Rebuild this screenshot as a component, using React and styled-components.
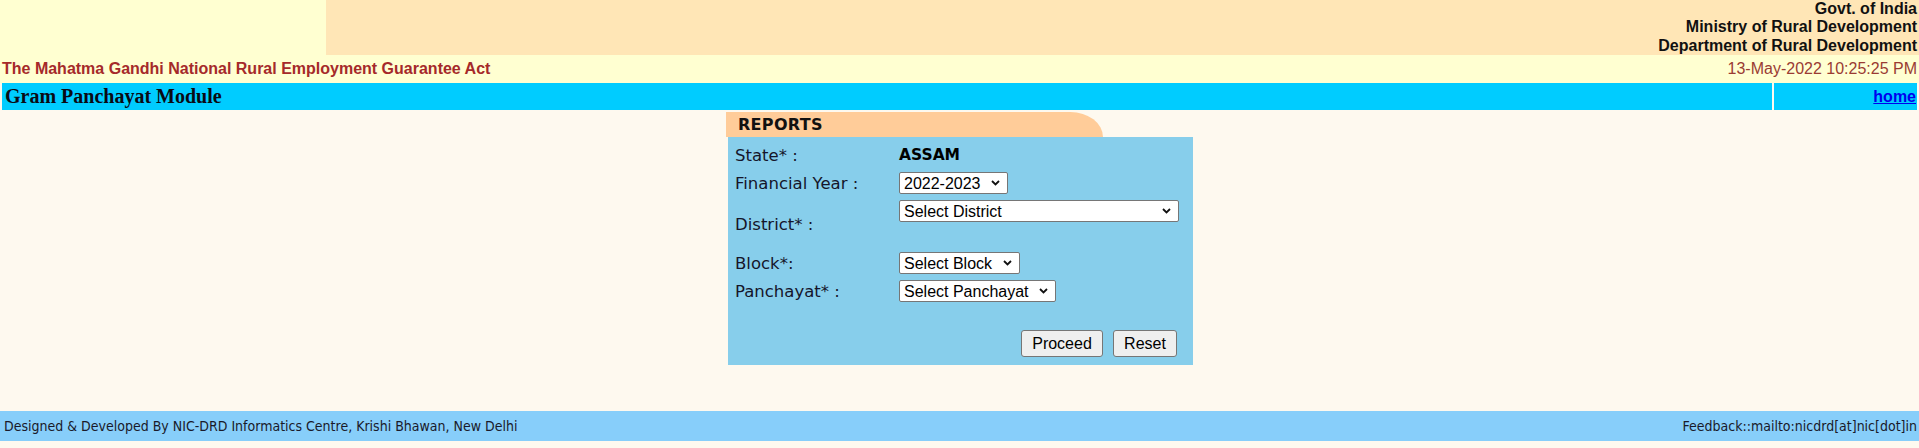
import React from 'react';
import styled, { createGlobalStyle } from 'styled-components';

const GlobalStyle = createGlobalStyle`
  html, body {
    margin: 0;
    padding: 0;
    background: #fef9ef;
  }
  body {
    font-family: 'Liberation Sans', Arial, sans-serif;
  }
`;

const Page = styled.div`
  width: 1919px;
  min-height: 448px;
  background: #fef9ef;
`;

const Masthead = styled.div`
  display: flex;
  height: 55px;
`;

const LogoCell = styled.div`
  width: 326px;
  background: #ffffd1;
`;

const MinistryCell = styled.div`
  flex: 1;
  background: #ffe6b6;
  text-align: right;
  font-family: 'Liberation Sans', Arial, sans-serif;
  font-weight: bold;
  font-size: 16px;
  line-height: 18.3px;
  color: #111;
  padding-right: 2px;
`;

const ActRow = styled.div`
  display: flex;
  align-items: center;
  justify-content: space-between;
  height: 28px;
  background: #ffffd1;
  padding: 0 2px 0 2px;
`;

const ActTitle = styled.span`
  font-family: 'Liberation Sans', Arial, sans-serif;
  font-weight: bold;
  font-size: 16px;
  color: #a52a2a;
`;

const DateText = styled.span`
  font-family: 'Liberation Sans', Arial, sans-serif;
  font-size: 16px;
  color: #9a3b33;
`;

const NavBar = styled.div`
  display: flex;
  gap: 2px;
  height: 27px;
  padding: 0 2px;
  background: #fef9ef;
`;

const NavCell = styled.div`
  display: flex;
  align-items: center;
  justify-content: ${({ $right }) => ($right ? 'flex-end' : 'flex-start')};
  width: ${({ $w }) => ($w ? `${$w}px` : 'auto')};
  flex: ${({ $w }) => ($w ? 'none' : '1')};
  background: #00ccff;
  padding: 0 ${({ $right }) => ($right ? '1px' : '3px')};
`;

const ModuleTitle = styled.span`
  font-family: 'Liberation Serif', 'Times New Roman', serif;
  font-weight: bold;
  font-size: 20px;
  color: #0a0a14;
`;

const HomeLink = styled.a`
  font-family: 'Liberation Sans', Arial, sans-serif;
  font-weight: bold;
  font-size: 16px;
  color: #0000ee;
  text-decoration: underline;
`;

const Main = styled.div`
  height: 299px;
  padding-top: 2px;
`;

const ReportBox = styled.div`
  width: 467px;
  margin: 0 auto;
`;

const ReportTab = styled.div`
  width: 377px;
  height: 25px;
  box-sizing: border-box;
  background: #ffcc99;
  border-top-right-radius: 34px 26px;
  padding-left: 12px;
  display: flex;
  align-items: center;
  font-family: 'DejaVu Sans', Verdana, sans-serif;
  font-weight: bold;
  font-size: 16px;
  color: #111;
  letter-spacing: 0.3px;
`;

const Panel = styled.div`
  margin-left: 2px;
  width: 465px;
  height: 228px;
  box-sizing: border-box;
  background: #87ceeb;
  padding: 7px 16px 0 7px;
  display: flex;
  flex-direction: column;
  gap: 6px;
`;

const FormRow = styled.div`
  display: grid;
  grid-template-columns: 164px 1fr;
  align-items: center;
  min-height: ${({ $tall }) => ($tall ? '46px' : '22px')};
`;

const RowLabel = styled.span`
  font-family: 'DejaVu Sans', Verdana, sans-serif;
  font-size: 16.5px;
  color: #15152a;
  padding-top: ${({ $shift }) => ($shift || 0)}px;
`;

const RowValue = styled.div`
  display: flex;
  flex-direction: column;
  align-self: ${({ $top }) => ($top ? 'start' : 'center')};
`;

const StateName = styled.span`
  font-family: 'DejaVu Sans', Verdana, sans-serif;
  font-weight: bold;
  font-size: 15.5px;
  color: #000;
`;

const SelectWrap = styled.span`
  position: relative;
  display: inline-flex;
  align-self: flex-start;
`;

const Select = styled.select`
  appearance: none;
  -webkit-appearance: none;
  font-family: 'Liberation Sans', Arial, sans-serif;
  font-size: 16px;
  color: #000;
  background: #fff;
  border: 1px solid #767676;
  border-radius: 2px;
  height: 22px;
  padding: 0 26px 0 4px;
  width: ${({ $w }) => ($w ? `${$w}px` : 'auto')};
  outline: none;
`;

const Chevron = styled.svg`
  position: absolute;
  right: 8px;
  top: 8px;
  width: 9px;
  height: 6px;
  pointer-events: none;
`;

const ButtonRow = styled.div`
  display: flex;
  justify-content: flex-end;
  gap: 10px;
  margin-top: 22px;
`;

const Button = styled.button`
  font-family: 'Liberation Sans', Arial, sans-serif;
  font-size: 16px;
  color: #000;
  background: #efefef;
  border: 1px solid #767676;
  border-radius: 3px;
  height: 27px;
  padding: 0 10px;
  width: ${({ $w }) => `${$w}px`};
`;

const Footer = styled.div`
  display: flex;
  align-items: center;
  justify-content: space-between;
  height: 30px;
  background: #87cefa;
  padding: 0 2px 0 4px;
  font-family: 'DejaVu Sans Condensed', Tahoma, sans-serif;
  font-size: 14px;
  color: #1a1a2a;
`;

const DropDown = ({ children, w }) => (
  <SelectWrap>
    <Select $w={w} defaultValue={children}>
      <option>{children}</option>
    </Select>
    <Chevron viewBox="0 0 9 6">
      <path d="M1 1 L4.5 4.5 L8 1" fill="none" stroke="#111" strokeWidth="1.8" />
    </Chevron>
  </SelectWrap>
);

export default function App() {
  return (
    <Page>
      <GlobalStyle />
      <Masthead>
        <LogoCell />
        <MinistryCell>
          Govt. of India
          <br />
          Ministry of Rural Development
          <br />
          Department of Rural Development
        </MinistryCell>
      </Masthead>

      <ActRow>
        <ActTitle>The Mahatma Gandhi National Rural Employment Guarantee Act</ActTitle>
        <DateText>13-May-2022 10:25:25 PM</DateText>
      </ActRow>

      <NavBar>
        <NavCell>
          <ModuleTitle>Gram Panchayat Module</ModuleTitle>
        </NavCell>
        <NavCell $w={141} $right>
          <HomeLink href="#">home</HomeLink>
        </NavCell>
      </NavBar>

      <Main>
        <ReportBox>
          <ReportTab>REPORTS</ReportTab>
          <Panel>
            <FormRow>
              <RowLabel>State* :</RowLabel>
              <RowValue>
                <StateName>ASSAM</StateName>
              </RowValue>
            </FormRow>
            <FormRow>
              <RowLabel>Financial Year :</RowLabel>
              <RowValue>
                <DropDown>2022-2023</DropDown>
              </RowValue>
            </FormRow>
            <FormRow $tall>
              <RowLabel $shift={3}>District* :</RowLabel>
              <RowValue $top>
                <DropDown w={280}>Select District</DropDown>
              </RowValue>
            </FormRow>
            <FormRow>
              <RowLabel>Block*:</RowLabel>
              <RowValue>
                <DropDown>Select Block</DropDown>
              </RowValue>
            </FormRow>
            <FormRow>
              <RowLabel>Panchayat* :</RowLabel>
              <RowValue>
                <DropDown>Select Panchayat</DropDown>
              </RowValue>
            </FormRow>
            <ButtonRow>
              <Button type="button" $w={82}>Proceed</Button>
              <Button type="button" $w={64}>Reset</Button>
            </ButtonRow>
          </Panel>
        </ReportBox>
      </Main>

      <Footer>
        <span>Designed &amp; Developed By NIC-DRD Informatics Centre, Krishi Bhawan, New Delhi</span>
        <span>Feedback::mailto:nicdrd[at]nic[dot]in</span>
      </Footer>
    </Page>
  );
}
